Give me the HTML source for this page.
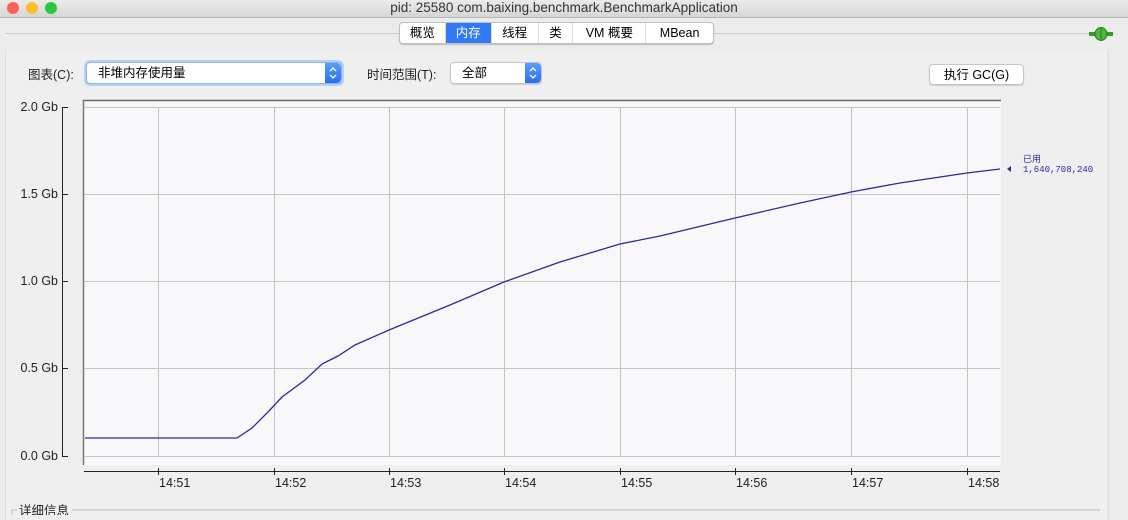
<!DOCTYPE html>
<html><head><meta charset="utf-8"><style>
body{margin:0;width:1128px;height:515px;overflow:hidden;background:#ececec;font-family:"Liberation Sans","Noto Sans CJK SC",sans-serif;position:relative}
.a{position:absolute}
.tb{left:0;top:0;width:1128px;height:17px;background:linear-gradient(#ebebeb,#d6d6d6);border-bottom:1px solid #b5b5b5;text-align:center;font-size:13.5px;line-height:16px;color:#333}
.dot{width:12px;height:12px;border-radius:50%;top:2px}
.tabs{left:399px;top:22px;width:313px;height:20px;border:1px solid #c0c0c0;border-radius:4px;background:#fff;display:flex;font-size:12.5px;line-height:20px;box-shadow:0 1px 1px #bbb}
.tabs div{border-right:1px solid #ddd;text-align:center}
.sel{background:#2f7bf5;color:#fff}
.btn{background:#fff;border:1px solid #c6c6c6;border-radius:4px;font-size:12.5px;line-height:20px;box-shadow:0 1px 1px #ccc}
.arr{position:absolute;right:0;top:0;width:16px;height:100%;background:linear-gradient(#5a9cf8,#2a6ef0);border-radius:0 4px 4px 0}
.lab{font-size:12.5px;color:#222}
</style></head><body>
<div class="a tb">pid: 25580 com.baixing.benchmark.BenchmarkApplication</div>
<div class="a dot" style="left:7px;background:#fc5f57"></div>
<div class="a dot" style="left:26px;background:#fdbc2e"></div>
<div class="a dot" style="left:45px;background:#28c840"></div>
<div class="a" style="left:5px;top:33px;width:1110px;height:1px;background:#ccc"></div>
<div class="a" style="left:5px;top:50px;width:1100px;height:470px;background:#efefef;border-left:1px solid #ddd"></div>
<div class="a" style="left:1108px;top:50px;width:1px;height:470px;background:#ddd"></div>
<div class="a tabs"><div style="width:45px">概览</div><div class="sel" style="width:45px">内存</div><div style="width:46px">线程</div><div style="width:34px">类</div><div style="width:72px">VM 概要</div><div style="border:none;width:67px">MBean</div></div>
<svg class="a" style="left:1089px;top:27px" width="24" height="14"><rect x="0" y="5" width="24" height="4" fill="#3a9a2a"/><ellipse cx="12" cy="7" rx="6" ry="6.5" fill="#4cb83a" stroke="#2a7a1f"/><line x1="12" y1="1" x2="12" y2="13" stroke="#2a7a1f"/></svg>
<div class="a lab" style="left:28px;top:64px">图表(C):</div>
<div class="a btn" style="left:86px;top:62px;width:254px;height:20px;border-color:#8db4ec;box-shadow:0 0 0 2px #b7d0f5"><span style="margin-left:11px">非堆内存使用量</span><div class="arr"><svg width="16" height="20"><path d="M5,8 L8,5 L11,8 M5,12 L8,15 L11,12" stroke="#fff" stroke-width="1.3" fill="none"/></svg></div></div>
<div class="a lab" style="left:367px;top:64px">时间范围(T):</div>
<div class="a btn" style="left:450px;top:62px;width:90px;height:20px"><span style="margin-left:11px">全部</span><div class="arr"><svg width="16" height="20"><path d="M5,8 L8,5 L11,8 M5,12 L8,15 L11,12" stroke="#fff" stroke-width="1.3" fill="none"/></svg></div></div>
<div class="a btn" style="left:929px;top:64px;width:93px;height:19px;text-align:center">执行 GC(G)</div>
<svg class="a" style="left:0;top:90px" width="1128" height="425" font-family="Liberation Sans, sans-serif">
<g transform="translate(0,-90)">
<rect x="83" y="100" width="918" height="365" fill="#f8f8fa"/>
<line x1="83" y1="100.5" x2="1001" y2="100.5" stroke="#666" stroke-width="1.5"/>
<line x1="83.5" y1="100" x2="83.5" y2="465" stroke="#777" stroke-width="1.5"/>
<g stroke="#c4c4c4" stroke-width="1">
<line x1="84" y1="107.5" x2="1000" y2="107.5"/><line x1="84" y1="194.5" x2="1000" y2="194.5"/><line x1="84" y1="281.5" x2="1000" y2="281.5"/><line x1="84" y1="368.5" x2="1000" y2="368.5"/><line x1="84" y1="456.5" x2="1000" y2="456.5"/>
<line x1="158.5" y1="107" x2="158.5" y2="457"/><line x1="274.5" y1="107" x2="274.5" y2="457"/><line x1="389.5" y1="107" x2="389.5" y2="457"/><line x1="504.5" y1="107" x2="504.5" y2="457"/><line x1="620.5" y1="107" x2="620.5" y2="457"/><line x1="735.5" y1="107" x2="735.5" y2="457"/><line x1="851.5" y1="107" x2="851.5" y2="457"/><line x1="967.5" y1="107" x2="967.5" y2="457"/>
</g>
<polyline fill="none" stroke="#2a2aa0" stroke-width="1.3" points="85,438 237,438 252,428 268,412 282,397 305,380 322,364 338,356 355,345 389,330 450,305 504,282 560,262 620,244 660,236 735,218 800,203 851,192 900,183 967,173 1000,169"/>
<g stroke="#222"><line x1="62.5" y1="107" x2="62.5" y2="457"/>
<line x1="62" y1="107.5" x2="68" y2="107.5"/><line x1="62" y1="194.5" x2="68" y2="194.5"/><line x1="62" y1="281.5" x2="68" y2="281.5"/><line x1="62" y1="368.5" x2="68" y2="368.5"/><line x1="62" y1="456.5" x2="68" y2="456.5"/>
<line x1="84" y1="471.5" x2="1000" y2="471.5"/>
<line x1="158.5" y1="468" x2="158.5" y2="475"/><line x1="274.5" y1="468" x2="274.5" y2="475"/><line x1="389.5" y1="468" x2="389.5" y2="475"/><line x1="504.5" y1="468" x2="504.5" y2="475"/><line x1="620.5" y1="468" x2="620.5" y2="475"/><line x1="735.5" y1="468" x2="735.5" y2="475"/><line x1="851.5" y1="468" x2="851.5" y2="475"/><line x1="967.5" y1="468" x2="967.5" y2="475"/></g>
<g font-size="12.5" fill="#222" text-anchor="end"><text x="58" y="111">2.0 Gb</text><text x="58" y="198">1.5 Gb</text><text x="58" y="285">1.0 Gb</text><text x="58" y="372">0.5 Gb</text><text x="58" y="460">0.0 Gb</text></g>
<g font-size="12.5" fill="#222"><text x="159" y="487">14:51</text><text x="275" y="487">14:52</text><text x="390" y="487">14:53</text><text x="505" y="487">14:54</text><text x="621" y="487">14:55</text><text x="736" y="487">14:56</text><text x="852" y="487">14:57</text><text x="968" y="487">14:58</text></g>
<polygon points="1007,169 1011,166 1011,172" fill="#2a2aa0"/>
<text x="1023" y="162" font-size="9" fill="#2a2aa0" font-family="Liberation Sans, Noto Sans CJK SC, sans-serif">已用</text>
<text x="1023" y="172" font-size="9" fill="#2a2aa0" font-family="Liberation Mono, monospace">1,640,708,240</text>
<path d="M12,515 V510 H17 M72,510 H1100" stroke="#bbb" fill="none"/>
<text x="19" y="515" font-size="12.5" fill="#222" font-family="Liberation Sans, Noto Sans CJK SC, sans-serif">详细信息</text>
</g></svg>
</body></html>
